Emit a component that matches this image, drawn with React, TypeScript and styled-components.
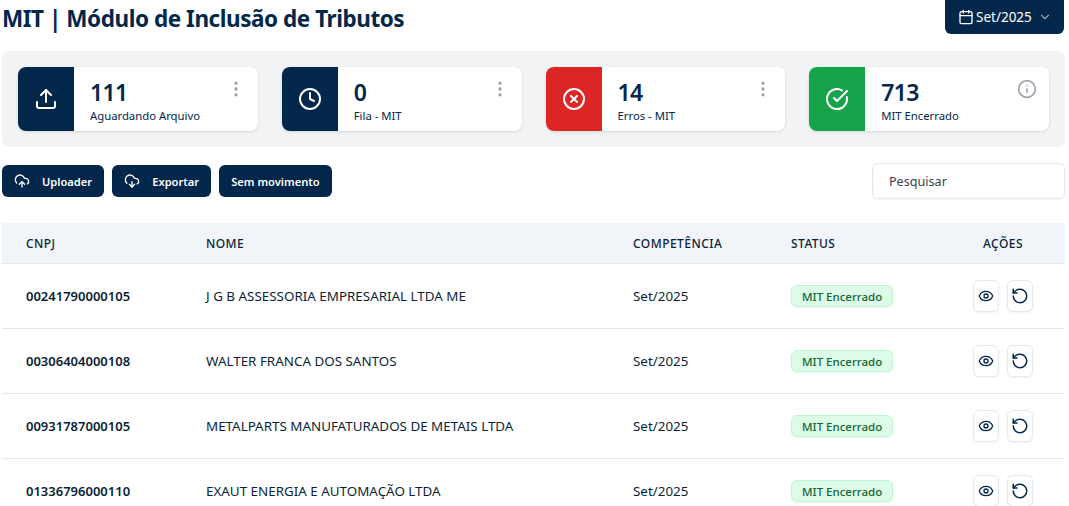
import React from 'react'
import styled, { createGlobalStyle } from 'styled-components'
import {
  Calendar,
  ChevronDown,
  CircleCheckBig,
  CircleX,
  Clock,
  CloudDownload,
  CloudUpload,
  EllipsisVertical,
  Eye,
  Info,
  RotateCcw,
  Upload,
} from 'lucide-react'

const navy = '#03274b'

const GlobalStyle = createGlobalStyle`
  html, body {
    margin: 0;
    height: 100%;
    overflow: hidden;
    background: #fff;
  }
  * {
    box-sizing: border-box;
  }
  body {
    font-family: "Noto Sans", "Open Sans", sans-serif;
    color: ${navy};
  }
`

const Page = styled.div`
  height: 506px;
  overflow: hidden;
  padding: 0 4px 0 2px;
`

const Header = styled.header`
  display: flex;
  justify-content: space-between;
  align-items: flex-start;
  height: 51px;
`

const Title = styled.h1`
  margin: 0;
  font-size: 22.5px;
  font-weight: 700;
  letter-spacing: -0.45px;
  line-height: 38px;
  color: ${navy};
`

const DateButton = styled.button`
  display: flex;
  align-items: center;
  width: 119px;
  height: 34px;
  margin-right: 1px;
  padding: 0 13px;
  border: 0;
  border-radius: 0 0 6px 6px;
  background: ${navy};
  color: #fff;
  font: 400 13.5px "Noto Sans", sans-serif;
  svg {
    flex: none;
  }
  span {
    margin: 0 6px 0 2px;
  }
  svg:last-child {
    color: #9ca3af;
  }
`

const StatsPanel = styled.section`
  display: grid;
  grid-template-columns: repeat(4, 1fr);
  gap: 24px;
  height: 96px;
  padding: 16px;
  border-radius: 8px;
  background: #f1f3f5;
`

const StatCard = styled.div`
  position: relative;
  display: flex;
  height: 64px;
  border-radius: 8px;
  background: #fff;
  overflow: hidden;
  box-shadow: 0 1px 3px rgba(0, 0, 0, 0.12);
`

const StatIcon = styled.div<{ $bg: string }>`
  display: flex;
  align-items: center;
  justify-content: center;
  width: 56px;
  flex: none;
  background: ${(p) => p.$bg};
  color: #fff;
`

const StatBody = styled.div`
  padding: 9px 0 0 16px;
`

const StatValue = styled.div`
  font-size: 23px;
  font-weight: 600;
  letter-spacing: -0.6px;
  line-height: 32px;
`

const StatLabel = styled.div`
  font-size: 11.3px;
  line-height: 16px;
`

const StatAction = styled.span`
  position: absolute;
  top: 12px;
  right: 12px;
  display: flex;
  color: #9ca3af;
`

const Toolbar = styled.div`
  display: flex;
  align-items: center;
  justify-content: space-between;
  height: 76px;
  padding-bottom: 8px;
`

const Buttons = styled.div`
  display: flex;
  gap: 8px;
`

const ActionButton = styled.button`
  display: flex;
  align-items: center;
  gap: 12px;
  height: 32px;
  padding: 0 12px;
  border: 0;
  border-radius: 6px;
  background: ${navy};
  color: #fff;
  font: 600 11.15px "Noto Sans", sans-serif;
  svg {
    flex: none;
  }
`

const Search = styled.input`
  width: 193px;
  height: 36px;
  padding: 1px 16px 0;
  border: 1px solid #e5e9f0;
  border-radius: 6px;
  font: 400 12.6px "Noto Sans", sans-serif;
  color: ${navy};
  box-shadow: 0 1px 2px rgba(0, 0, 0, 0.05);
  &::placeholder {
    color: #374151;
    opacity: 1;
  }
`

const Table = styled.table`
  width: 100%;
  border-collapse: collapse;
  table-layout: fixed;
`

const Th = styled.th<{ $w: number; $center?: boolean }>`
  width: ${(p) => p.$w}px;
  height: 40px;
  padding: 1px 24px 0;
  background: #f1f5f9;
  border-bottom: 1px solid #e2e8f0;
  font-size: 12px;
  font-weight: 500;
  letter-spacing: 0.45px;
  color: #0b1f38;
  text-align: ${(p) => (p.$center ? 'center' : 'left')};
`

const Td = styled.td<{ $strong?: boolean }>`
  height: 65px;
  padding: 0 24px;
  border-bottom: 1px solid #e2e8f0;
  font-size: ${(p) => (p.$strong ? '13px' : '13.4px')};
  font-weight: ${(p) => (p.$strong ? 600 : 400)};
  color: #0b1f38;
`

const Badge = styled.span`
  display: inline-block;
  height: 22px;
  padding: 0 10px;
  border: 1px solid #bbf7d0;
  border-radius: 6px;
  background: #dcfce7;
  color: #166534;
  font-size: 11.5px;
  font-weight: 500;
  line-height: 21px;
  box-shadow: 0 1px 2px rgba(0, 0, 0, 0.05);
`

const Actions = styled.div`
  display: flex;
  justify-content: center;
  gap: 8px;
`

const IconButton = styled.button`
  display: flex;
  align-items: center;
  justify-content: center;
  width: 26px;
  height: 32px;
  padding: 0;
  border: 1px solid #e5e9f0;
  border-radius: 6px;
  background: #fff;
  color: ${navy};
  box-shadow: 0 1px 2px rgba(0, 0, 0, 0.05);
`

const stats = [
  { value: '111', label: 'Aguardando Arquivo', bg: navy, icon: <Upload size={24} strokeWidth={2} /> },
  { value: '0', label: 'Fila - MIT', bg: navy, icon: <Clock size={24} strokeWidth={2} /> },
  { value: '14', label: 'Erros - MIT', bg: '#dc2626', icon: <CircleX size={24} strokeWidth={2} /> },
  { value: '713', label: 'MIT Encerrado', bg: '#16a34a', icon: <CircleCheckBig size={24} strokeWidth={2} />, info: true },
]

const rows = [
  { cnpj: '00241790000105', nome: 'J G B ASSESSORIA EMPRESARIAL LTDA ME' },
  { cnpj: '00306404000108', nome: 'WALTER FRANCA DOS SANTOS' },
  { cnpj: '00931787000105', nome: 'METALPARTS MANUFATURADOS DE METAIS LTDA' },
  { cnpj: '01336796000110', nome: 'EXAUT ENERGIA E AUTOMAÇÃO LTDA' },
]

const App = () => {
  return (
    <Page>
      <GlobalStyle />
      <Header>
        <Title>MIT | Módulo de Inclusão de Tributos</Title>
        <DateButton>
          <Calendar size={16} />
          <span>Set/2025</span>
          <ChevronDown size={14} />
        </DateButton>
      </Header>
      <StatsPanel>
        {stats.map((s) => (
          <StatCard key={s.label}>
            <StatIcon $bg={s.bg}>{s.icon}</StatIcon>
            <StatBody>
              <StatValue>{s.value}</StatValue>
              <StatLabel>{s.label}</StatLabel>
            </StatBody>
            <StatAction>{s.info ? <Info size={20} /> : <EllipsisVertical size={20} />}</StatAction>
          </StatCard>
        ))}
      </StatsPanel>
      <Toolbar>
        <Buttons>
          <ActionButton>
            <CloudUpload size={16} />
            Uploader
          </ActionButton>
          <ActionButton>
            <CloudDownload size={16} />
            Exportar
          </ActionButton>
          <ActionButton>Sem movimento</ActionButton>
        </Buttons>
        <Search placeholder="Pesquisar" />
      </Toolbar>
      <Table>
        <thead>
          <tr>
            <Th $w={180}>CNPJ</Th>
            <Th $w={427}>NOME</Th>
            <Th $w={158}>COMPETÊNCIA</Th>
            <Th $w={174}>STATUS</Th>
            <Th $w={124} $center>AÇÕES</Th>
          </tr>
        </thead>
        <tbody>
          {rows.map((r) => (
            <tr key={r.cnpj}>
              <Td $strong>{r.cnpj}</Td>
              <Td>{r.nome}</Td>
              <Td>Set/2025</Td>
              <Td>
                <Badge>MIT Encerrado</Badge>
              </Td>
              <Td>
                <Actions>
                  <IconButton><Eye size={16} /></IconButton>
                  <IconButton><RotateCcw size={18} /></IconButton>
                </Actions>
              </Td>
            </tr>
          ))}
        </tbody>
      </Table>
    </Page>
  )
}

export default App
